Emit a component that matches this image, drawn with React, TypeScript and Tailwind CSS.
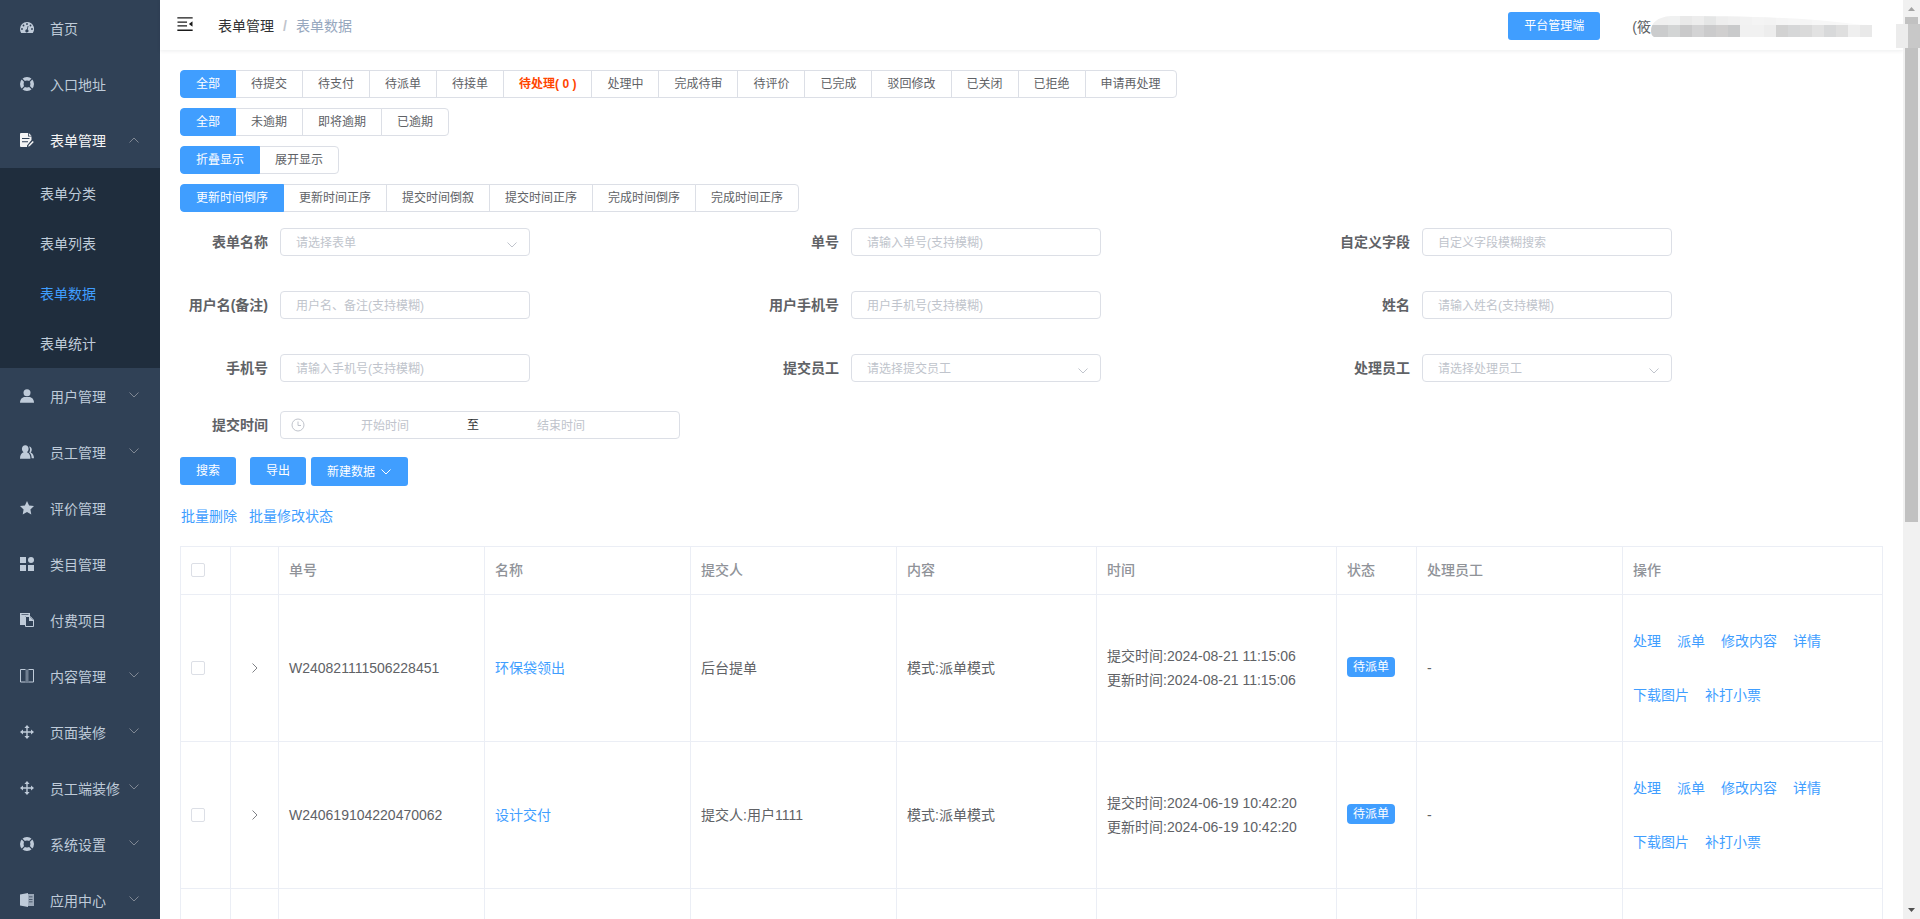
import { type ReactNode, useState } from 'react';

type IconProps = { children: ReactNode };

function Icon({ children }: IconProps) {
  return (
    <svg viewBox="0 0 14 14" className="h-3.5 w-3.5 shrink-0" fill="currentColor" aria-hidden="true">
      {children}
    </svg>
  );
}

const ICONS: Record<string, ReactNode> = {
  dashboard: (
    <path
      fillRule="evenodd"
      d="M7 1a7 7 0 0 0-7 7c0 1.500.4 2.900 1.200 4h11.600A7 7 0 0 0 7 1zM7 2.100a.9.9 0 1 1 0 1.800.9.9 0 0 1 0-1.800zM3.500 3.600a.9.9 0 1 1 0 1.800.9.9 0 0 1 0-1.800zM10.500 3.600a.9.9 0 1 1 0 1.800.9.9 0 0 1 0-1.800zM2 7.100a.9.9 0 1 1 0 1.800.9.9 0 0 1 0-1.800zM12 7.100a.9.9 0 1 1 0 1.800.9.9 0 0 1 0-1.800zM7.700 4.900l.8.200-.8 3.400a1.600 1.600 0 1 1-.8-.2z"
    />
  ),
  help: (
    <>
      <circle cx="7" cy="7" r="5.200" fill="none" stroke="currentColor" strokeWidth="3.600" />
      <path d="M1.200 1.200l3.800 3.800M12.800 1.200L9 5M1.200 12.800L5 9M12.800 12.800L9 9" stroke="#304156" strokeWidth="1.200" />
    </>
  ),
  form: (
    <>
      <path
        fillRule="evenodd"
        d="M1 0h7v3.500h3.500V7L7 12.500V14H1a1 1 0 0 1-1-1V1a1 1 0 0 1 1-1zM2 5v1h7.500V5zM2 8.300v1h6v-1z"
      />
      <path d="M8.800 0l2.700 2.700H8.800zM12.700 8l1.100 1.100-3.900 4-1.700.7.500-1.800z" />
    </>
  ),
  user: (
    <>
      <circle cx="7" cy="3.700" r="3.500" />
      <path d="M0 13.800c0-3.500 2.200-5.800 5-5.800h4c2.800 0 5 2.300 5 5.800z" />
    </>
  ),
  users: (
    <>
      <path d="M5.300.2c2 0 3.300 1.600 3.300 3.600 0 1.500-.6 2.800-1.700 3.500 2.300.7 3.500 2.800 3.500 6.500H0c0-3.700 1.300-5.800 3.600-6.500-1-.7-1.700-2-1.700-3.500C1.900 1.800 3.300.2 5.300.2z" />
      <path d="M9 1.500c1.700.2 2.800 1.600 2.800 3.300 0 1.100-.4 2-1.100 2.700 2 .8 3.200 2.900 3.300 5.700h-2.300c-.1-2.600-.9-4.600-2.500-5.800.6-.9.9-2.300.8-3.500A5 5 0 0 0 9 1.500z" />
    </>
  ),
  star: <path d="M7 0l2.100 4.500 4.900.6-3.600 3.400.9 5L7 11.100 2.700 13.500l.9-5L0 5.100l4.900-.6z" />,
  menu: (
    <>
      <path d="M0 0h6v6H0zM0 8h6v6H0zM8 8h6v6H8z" />
      <circle cx="11" cy="3" r="3" />
    </>
  ),
  document: (
    <>
      <path d="M0 0h10v3H5v9H0z" />
      <path fill="none" stroke="currentColor" strokeWidth="1" d="M5.500 3.500h4.800L13.500 7v6.500h-8z" />
      <path d="M9 4h1l4 4H9z" />
      <path d="M1.500 1.500h7" stroke="#304156" strokeWidth=".7" />
    </>
  ),
  reading: (
    <>
      <path fill="none" stroke="currentColor" strokeWidth="1" d="M5.500.500h-5v12.500h5M8.500.500h5v12.500h-5" />
      <path d="M5.500.500h3V14h-3z" opacity=".45" />
    </>
  ),
  rank: (
    <path d="M7 0l2.600 3H7.700v3.300H11V4.400L14 7l-3 2.600V7.700H7.700V11h1.900L7 14l-2.600-3h1.900V7.700H3v1.900L0 7l3-2.600v1.900h3.300V3H4.400z" />
  ),
  notebook: (
    <>
      <path d="M0 1.500L8 0v14l-8-1.500z" />
      <path fillRule="evenodd" d="M8 1h6v12H8zM9 3.500v.8h3.500v-.8zM9 6v.8h3.500V6zM9 8.500v.8h3.500v-.8z" opacity=".75" />
    </>
  ),
};

const MENU_TOP = [
  { label: '首页', icon: 'dashboard' },
  { label: '入口地址', icon: 'help' },
];

const SUB_MENU = ['表单分类', '表单列表', '表单数据', '表单统计'];

const MENU_BOTTOM = [
  { label: '用户管理', icon: 'user', arrow: true },
  { label: '员工管理', icon: 'users', arrow: true },
  { label: '评价管理', icon: 'star' },
  { label: '类目管理', icon: 'menu' },
  { label: '付费项目', icon: 'document' },
  { label: '内容管理', icon: 'reading', arrow: true },
  { label: '页面装修', icon: 'rank', arrow: true },
  { label: '员工端装修', icon: 'rank', arrow: true },
  { label: '系统设置', icon: 'help', arrow: true },
  { label: '应用中心', icon: 'notebook', arrow: true },
];

const FILTERS = [
  {
    name: '状态',
    items: [
      '全部', '待提交', '待支付', '待派单', '待接单', '待处理( 0 )', '处理中',
      '完成待审', '待评价', '已完成', '驳回修改', '已关闭', '已拒绝', '申请再处理',
    ],
  },
  { name: '逾期', items: ['全部', '未逾期', '即将逾期', '已逾期'] },
  { name: '显示', items: ['折叠显示', '展开显示'] },
  {
    name: '排序',
    items: ['更新时间倒序', '更新时间正序', '提交时间倒叙', '提交时间正序', '完成时间倒序', '完成时间正序'],
  },
];

const FIELDS = [
  { id: 'form', label: '表单名称', placeholder: '请选择表单', select: true },
  { id: 'no', label: '单号', placeholder: '请输入单号(支持模糊)' },
  { id: 'custom', label: '自定义字段', placeholder: '自定义字段模糊搜索' },
  { id: 'nick', label: '用户名(备注)', placeholder: '用户名、备注(支持模糊)' },
  { id: 'userPhone', label: '用户手机号', placeholder: '用户手机号(支持模糊)' },
  { id: 'name', label: '姓名', placeholder: '请输入姓名(支持模糊)' },
  { id: 'phone', label: '手机号', placeholder: '请输入手机号(支持模糊)' },
  { id: 'submitter', label: '提交员工', placeholder: '请选择提交员工', select: true },
  { id: 'handler', label: '处理员工', placeholder: '请选择处理员工', select: true },
];

const COLUMNS = ['单号', '名称', '提交人', '内容', '时间', '状态', '处理员工', '操作'];

const ROWS = [
  { no: 'W240821111506228451', name: '环保袋领出', submitter: '后台提单', time: '2024-08-21 11:15:06' },
  { no: 'W240619104220470062', name: '设计交付', submitter: '提交人:用户1111', time: '2024-06-19 10:42:20' },
];

function Chevron({ className = '' }: { className?: string }) {
  return (
    <svg viewBox="0 0 12 12" className={`h-3 w-3 shrink-0 ${className}`} fill="none" stroke="currentColor" aria-hidden="true">
      <path d="M1.500 3.500L6 8l4.500-4.500" />
    </svg>
  );
}

function MenuItem({ label, icon, arrow, open }: { label: string; icon: string; arrow?: boolean; open?: boolean }) {
  return (
    <a
      href="#"
      className={`flex h-14 items-center px-5 text-sm whitespace-nowrap ${open ? 'text-[#f4f4f5]' : 'text-[#bfcbd9]'}`}
    >
      <Icon>{ICONS[icon]}</Icon>
      <span className="ml-4 flex-1 pt-0.5">{label}</span>
      {arrow && <Chevron className={open ? 'rotate-180 text-[#7f8793]' : 'mb-0.5 text-[#7f8793]'} />}
    </a>
  );
}

function Sidebar() {
  return (
    <nav className="w-40 shrink-0 overflow-hidden bg-[#304156]">
      {MENU_TOP.map((item) => (
        <MenuItem key={item.label} {...item} />
      ))}
      <MenuItem label="表单管理" icon="form" arrow open />
      <div className="bg-[#1f2d3d]">
        {SUB_MENU.map((label) => (
          <a
            key={label}
            href="#"
            className={`flex h-[50px] items-center pt-0.5 pl-10 text-sm ${label === '表单数据' ? 'text-[#409eff]' : 'text-[#bfcbd9]'}`}
          >
            {label}
          </a>
        ))}
      </div>
      {MENU_BOTTOM.map((item) => (
        <MenuItem key={item.label} {...item} />
      ))}
    </nav>
  );
}

// Pixelated mask over the account name
const MASK_TOP = ['#f0f0f0', '#f0f1f1', '#e9e9e9', '#ededed', '#e5e6e6', '#eeeeee', '#f0f0f0', '#f2f2f2', '#f4f4f4', '#f3f3f3', '#f5f5f5', '#f6f6f6', '#f5f5f5', '#f7f7f7', '#f7f7f7', '#f8f8f8', '#fafafa', '#fbfbfb'];
const MASK_BOTTOM = ['#cbcccd', '#d3d5d5', '#c9c9ca', '#d3d3d4', '#cbcbcc', '#d0cfcf', '#c9cacb', '#f1f1f1', '#f1f1f1', '#ededed', '#d2d2d2', '#d6d7d8', '#dadada', '#e2e2e2', '#d8d9da', '#dfdfdf', '#efefef', '#e9e9e9'];

function NameMask() {
  return (
    <svg viewBox="0 0 221 21" className="h-[21px] w-[221px]" aria-hidden="true">
      <clipPath id="mask-shape">
        <path d="M0 15C0 7 6 1 20 0C90 0 150 1 208 8.500L221 9v12H3C1 20 0 18 0 15z" />
      </clipPath>
      <g clipPath="url(#mask-shape)" shapeRendering="crispEdges">
        {MASK_TOP.map((color, i) => (
          <rect key={`t${i}`} x={i ? i * 12 + 5 : 0} y="0" width={i ? 12 : 17} height="9" fill={color} />
        ))}
        {MASK_BOTTOM.map((color, i) => (
          <rect key={`b${i}`} x={i ? i * 12 + 5 : 0} y="9" width={i ? 12 : 17} height="12" fill={color} />
        ))}
      </g>
    </svg>
  );
}

function Header() {
  return (
    <header className="flex h-[50px] shrink-0 items-center justify-between pt-0.5 pr-[31px] pl-[15px] shadow-[0_1px_4px_rgba(0,21,41,0.08)]">
      <div className="flex items-center text-sm">
        <button type="button" aria-label="收起菜单" className="pb-1">
          <svg viewBox="0 0 1024 1024" className="h-5 w-5" fill="#1a1a1a" aria-hidden="true">
            <path d="M120 160h784v72H120zM120 792h784v72H120zM128 378h488v64H128zM128 582h488v64H128zM882 642L725 519a9 9 0 0 1 0-14l157-123a9 9 0 0 1 14 7v246a9 9 0 0 1-14 7z" />
          </svg>
        </button>
        <a href="#" className="ml-[23px] text-[#303133]">表单管理</a>
        <span className="mx-[9px] font-bold text-[#c0c4cc]">/</span>
        <span className="text-[#97a8be]">表单数据</span>
      </div>
      <div className="flex items-center">
        <button type="button" className="h-7 rounded-[3px] bg-[#409eff] px-4 text-xs text-white">
          平台管理端
        </button>
        <span className="ml-8 pt-0.5 text-sm text-[#606266]">(筱</span>
        <NameMask />
      </div>
    </header>
  );
}

function FilterGroup({ name, items }: { name: string; items: string[] }) {
  const [active, setActive] = useState(items[0]);
  return (
    <div role="group" aria-label={name} className="flex">
      {items.map((item) => {
        let color = 'border-[#dcdfe6] bg-white text-[#606266]';
        if (item === active) color = 'z-10 border-[#409eff] bg-[#409eff] text-white';
        else if (item.startsWith('待处理')) color = 'border-[#dcdfe6] bg-white font-bold text-[#ff4500]';
        return (
          <button
            key={item}
            type="button"
            onClick={() => setActive(item)}
            className={`relative -ml-px h-7 border px-[15px] text-xs whitespace-nowrap first:ml-0 first:rounded-l last:rounded-r ${color}`}
          >
            {item}
          </button>
        );
      })}
    </div>
  );
}

function Field({ id, label, placeholder, select }: { id: string; label: string; placeholder: string; select?: boolean }) {
  return (
    <div className="flex h-7 items-center">
      <label htmlFor={id} className="w-[100px] shrink-0 pr-3 text-right text-sm font-bold whitespace-nowrap text-[#606266]">
        {label}
      </label>
      {select ? (
        <div className="relative w-[250px]">
          <select
            id={id}
            className="block h-7 w-full appearance-none rounded border border-[#dcdfe6] bg-white px-[15px] pt-0.5 text-xs text-[#c0c4cc]"
          >
            <option>{placeholder}</option>
          </select>
          <Chevron className="pointer-events-none absolute top-[11px] right-3 text-[#c0c4cc]" />
        </div>
      ) : (
        <input
          id={id}
          type="text"
          placeholder={placeholder}
          className="h-7 w-[250px] rounded border border-[#dcdfe6] px-[15px] pt-0.5 text-xs text-[#606266] placeholder:text-[#c0c4cc]"
        />
      )}
    </div>
  );
}

function DateRange() {
  return (
    <div className="mt-[29px] flex h-7 items-center">
      <label htmlFor="start" className="w-[100px] shrink-0 pr-3 text-right text-sm font-bold text-[#606266]">
        提交时间
      </label>
      <div className="flex h-7 w-[400px] items-center rounded border border-[#dcdfe6] px-2.5 text-xs">
        <svg viewBox="0 0 14 14" className="mr-1.5 h-3.5 w-3.5 shrink-0 text-[#c0c4cc]" fill="none" stroke="currentColor" aria-hidden="true">
          <circle cx="7" cy="7" r="6" />
          <path d="M7 3.500V7.500h3" />
        </svg>
        <input id="start" type="text" placeholder="开始时间" className="w-[148px] pt-0.5 text-center placeholder:text-[#c0c4cc]" />
        <span className="w-7 text-center text-[#303133]">至</span>
        <input type="text" aria-label="结束时间" placeholder="结束时间" className="w-[148px] pt-0.5 text-center placeholder:text-[#c0c4cc]" />
      </div>
    </div>
  );
}

function Checkbox({ label }: { label: string }) {
  return (
    <input
      type="checkbox"
      aria-label={label}
      className="block h-3.5 w-3.5 appearance-none rounded-xs border border-[#dcdfe6] bg-white checked:border-[#409eff] checked:bg-[#409eff]"
    />
  );
}

function DataTable() {
  const cell = 'border-r border-b border-[#ebeef5] px-2.5';
  return (
    <table className="mt-5 w-full table-fixed border-separate border-spacing-0 border-t border-l border-[#ebeef5] text-left text-sm text-[#606266]">
      <colgroup>
        <col className="w-[50px]" />
        <col className="w-12" />
        <col />
        <col />
        <col />
        <col className="w-[200px]" />
        <col className="w-60" />
        <col className="w-20" />
        <col />
        <col className="w-[260px]" />
      </colgroup>
      <thead>
        <tr className="h-12 text-[#909399]">
          <th className={`${cell} pb-0.5`}>
            <Checkbox label="全选" />
          </th>
          <th className={cell} />
          {COLUMNS.map((title) => (
            <th key={title} className={`${cell} pb-0.5 font-medium`}>{title}</th>
          ))}
        </tr>
      </thead>
      <tbody>
        {ROWS.map((row) => (
          <tr key={row.no} className="h-[147px]">
            <td className={cell}>
              <Checkbox label={row.no} />
            </td>
            <td className={cell}>
              <button type="button" aria-label="展开" className="mx-auto block text-[#808286]">
                <Chevron className="-rotate-90" />
              </button>
            </td>
            <td className={cell}>{row.no}</td>
            <td className={cell}>
              <a href="#" className="text-[#409eff]">{row.name}</a>
            </td>
            <td className={cell}>{row.submitter}</td>
            <td className={cell}>模式:派单模式</td>
            <td className={`${cell} leading-6`}>
              <p>提交时间:{row.time}</p>
              <p>更新时间:{row.time}</p>
            </td>
            <td className={`${cell} pb-0.5`}>
              <span className="block h-5 w-12 rounded bg-[#409eff] text-center text-xs leading-5 text-white">待派单</span>
            </td>
            <td className={cell}>-</td>
            <td className={cell}>
              <div className="flex flex-wrap gap-x-4 gap-y-[34px] text-[#409eff]">
                {['处理', '派单', '修改内容', '详情', '下载图片', '补打小票'].map((action) => (
                  <button key={action} type="button">{action}</button>
                ))}
              </div>
            </td>
          </tr>
        ))}
        <tr className="h-[147px]" aria-hidden="true">
          <td className={cell} />
          <td className={cell} />
          {COLUMNS.map((title) => (
            <td key={title} className={cell} />
          ))}
        </tr>
      </tbody>
    </table>
  );
}

function Scrollbar() {
  return (
    <div className="relative flex w-[17px] shrink-0 flex-col items-center bg-[#f1f1f1]" aria-hidden="true">
      <svg viewBox="0 0 17 17" className="h-[17px] w-[17px] shrink-0" fill="#a3a3a3">
        <path d="M5 11h7L8.500 7z" />
      </svg>
      <div className="h-[55%] w-[13px] bg-[#c1c1c1]" />
      <svg viewBox="0 0 17 17" className="mt-auto h-[17px] w-[17px] shrink-0" fill="#505050">
        <path d="M5 6h7l-3.500 4z" />
      </svg>
      <div className="absolute top-6 right-0 flex h-6 w-6">
        <div className="w-3 bg-[#ececec]" />
        <div className="w-3 bg-[#c8c8c8]" />
      </div>
    </div>
  );
}

export default function App() {
  return (
    <div className="flex h-screen overflow-hidden bg-white font-['Liberation_Sans','Noto_Sans_CJK_SC',sans-serif]">
      <Sidebar />
      <div className="flex min-w-0 flex-1 flex-col">
        <Header />
        <main className="min-h-0 flex-1 overflow-hidden p-5">
          <div className="flex flex-col gap-2.5">
            {FILTERS.map((group) => (
              <FilterGroup key={group.name} {...group} />
            ))}
          </div>

          <form className="mt-4">
            <div className="grid grid-cols-3 gap-x-2.5 gap-y-[35px]">
              {FIELDS.map((field) => (
                <Field key={field.id} {...field} />
              ))}
            </div>
            <DateRange />
          </form>

          <div className="mt-[18px] flex text-xs text-white">
            <button type="button" className="h-7 rounded-[3px] bg-[#409eff] px-4">搜索</button>
            <button type="button" className="ml-3.5 h-7 rounded-[3px] bg-[#409eff] px-4">导出</button>
            <button type="button" className="ml-[5px] flex h-[29px] items-center gap-[5px] rounded-[3px] bg-[#409eff] px-4">
              新建数据
              <Chevron />
            </button>
          </div>

          <div className="mt-5 flex gap-3 pl-px text-sm text-[#409eff]">
            <button type="button">批量删除</button>
            <button type="button">批量修改状态</button>
          </div>

          <DataTable />
        </main>
      </div>
      <Scrollbar />
    </div>
  );
}
